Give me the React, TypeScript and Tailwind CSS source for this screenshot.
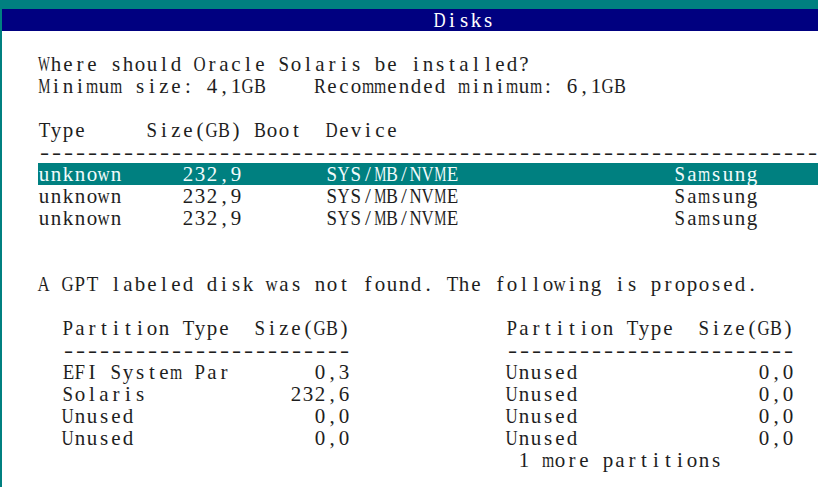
const COLS = 68

// build a fixed-width console line from [column, text] pieces
const row = (...segs: [number, string][]) => {
  const a = Array(COLS).fill(' ')
  segs.forEach(([c, s]) => s.split('').forEach((ch, i) => { if (c + i < COLS) a[c + i] = ch }))
  return a.join('')
}

const dashes = (n: number) => '-'.repeat(n)

// rough Liberation Serif advance widths (em), used to squeeze wide glyphs into a 12px cell
const WIDE: Record<string, number> = {
  m: 0.778, w: 0.722,
  A: 0.722, B: 0.667, C: 0.667, D: 0.722, E: 0.611, F: 0.556, G: 0.722, H: 0.722, K: 0.722,
  L: 0.611, M: 0.889, N: 0.722, O: 0.722, P: 0.556, R: 0.667, S: 0.556, T: 0.611, U: 0.722,
  V: 0.722, W: 0.944, Y: 0.722,
}

const SCALE: Record<string, string> = {
  '0.6': 'scale-x-[0.6]',
  '0.65': 'scale-x-[0.65]',
  '0.7': 'scale-x-[0.7]',
  '0.75': 'scale-x-[0.75]',
  '0.8': 'scale-x-[0.8]',
  '0.85': 'scale-x-[0.85]',
  '0.9': 'scale-x-[0.9]',
}

const glyphClass = (ch: string) => {
  if (ch === '-') return 'scale-x-[1.3]'
  const w = WIDE[ch]
  if (!w) return ''
  const s = Math.min(0.9, 0.575 / w)
  const steps = [0.6, 0.65, 0.7, 0.75, 0.8, 0.85, 0.9]
  const pick = steps.reduce((p, c) => (Math.abs(c - s) < Math.abs(p - s) ? c : p))
  return SCALE[String(pick)]
}

function Line({ text, hl }: { text: string; hl?: number }) {
  return (
    <div className="flex h-[22px] leading-[22px]">
      {text.split('').map((ch, i) => (
        <span
          key={i}
          className={`flex h-[22px] w-[12px] shrink-0 justify-center ${hl !== undefined && i >= hl ? 'bg-[#008080] text-[#f2fbfb]' : ''}`}
        >
          {ch !== ' ' && <span className={glyphClass(ch)}>{ch}</span>}
        </span>
      ))}
    </div>
  )
}

const disk = row([3, 'unknown'], [15, '232,9'], [27, 'SYS/MB/NVME'], [56, 'Samsung'])

const lines: { text: string; hl?: number }[] = [
  { text: row() },
  { text: row([3, 'Where should Oracle Solaris be installed?']) },
  { text: row([3, 'Minimum size: 4,1GB    Recommended minimum: 6,1GB']) },
  { text: row() },
  { text: row([3, 'Type     Size(GB) Boot  Device']) },
  { text: row([3, dashes(65)]) },
  { text: disk, hl: 3 },
  { text: disk },
  { text: disk },
  { text: row() },
  { text: row() },
  { text: row([3, 'A GPT labeled disk was not found. The following is proposed.']) },
  { text: row() },
  { text: row([5, 'Partition Type  Size(GB)'], [42, 'Partition Type  Size(GB)']) },
  { text: row([5, dashes(24)], [42, dashes(24)]) },
  { text: row([5, 'EFI System Par'], [26, '0,3'], [42, 'Unused'], [63, '0,0']) },
  { text: row([5, 'Solaris'], [24, '232,6'], [42, 'Unused'], [63, '0,0']) },
  { text: row([5, 'Unused'], [26, '0,0'], [42, 'Unused'], [63, '0,0']) },
  { text: row([5, 'Unused'], [26, '0,0'], [42, 'Unused'], [63, '0,0']) },
  { text: row([43, '1 more partitions']) },
  { text: row() },
]

export default function App() {
  return (
    <div className="h-[487px] w-[818px] overflow-hidden bg-[#008080] pl-[2px] pt-[9px] font-['Liberation_Serif',serif] text-[21px]">
      <div className="bg-[#000080] text-white">
        <Line text={row([36, 'Disks'])} />
      </div>
      <div className="h-full bg-white text-[#1e1e1e]">
        {lines.map((l, i) => (
          <Line key={i} text={l.text} hl={l.hl} />
        ))}
      </div>
    </div>
  )
}
